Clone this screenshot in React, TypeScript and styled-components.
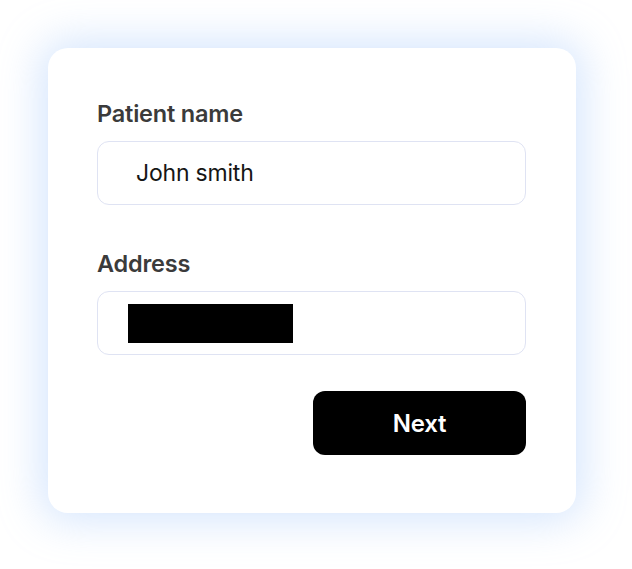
import React from 'react';
import styled, { createGlobalStyle } from 'styled-components';

const GlobalStyle = createGlobalStyle`
  html, body {
    margin: 0;
    padding: 0;
    background: #ffffff;
  }
  body {
    font-family: Inter, "Noto Sans", sans-serif;
  }
`;

const Page = styled.div`
  width: 632px;
  height: 569px;
  padding: 48px 56px 56px 48px;
  box-sizing: border-box;
`;

const Card = styled.div`
  width: 528px;
  height: 465px;
  box-sizing: border-box;
  padding: 52px 50px 54px 49px;
  background: #ffffff;
  border-radius: 20px;
  box-shadow: 0 0 42px 8px rgba(200, 222, 252, 0.75);
  display: flex;
  flex-direction: column;
`;

const Field = styled.div`
  display: flex;
  flex-direction: column;
  gap: 13px;
  & + & {
    margin-top: 45px;
  }
`;

const Label = styled.div`
  font-size: 23.5px;
  line-height: 28px;
  font-weight: 600;
  color: #3b3b3b;
  letter-spacing: -0.2px;
`;

const Input = styled.div<{ $inset: number }>`
  height: 64px;
  box-sizing: border-box;
  border: 1.5px solid #dfe3f3;
  border-radius: 12px;
  display: flex;
  align-items: center;
  padding-left: ${(p) => p.$inset}px;
  font-size: 23px;
  color: #161616;
  letter-spacing: -0.2px;
`;

const Redacted = styled.span`
  display: block;
  width: 165px;
  height: 39px;
  background: #000000;
`;

const Actions = styled.div`
  display: flex;
  justify-content: flex-end;
  margin-top: 36px;
`;

const Button = styled.button`
  width: 213px;
  height: 64px;
  border: none;
  border-radius: 12px;
  background: #000000;
  color: #ffffff;
  font-family: Inter, "Noto Sans", sans-serif;
  font-size: 24px;
  font-weight: 600;
  letter-spacing: -0.2px;
  cursor: pointer;
`;

export default function App() {
  return (
    <>
      <GlobalStyle />
      <Page>
        <Card>
          <Field>
            <Label>Patient name</Label>
            <Input $inset={38}>John smith</Input>
          </Field>
          <Field>
            <Label>Address</Label>
            <Input $inset={30}>
              <Redacted />
            </Input>
          </Field>
          <Actions>
            <Button>Next</Button>
          </Actions>
        </Card>
      </Page>
    </>
  );
}
